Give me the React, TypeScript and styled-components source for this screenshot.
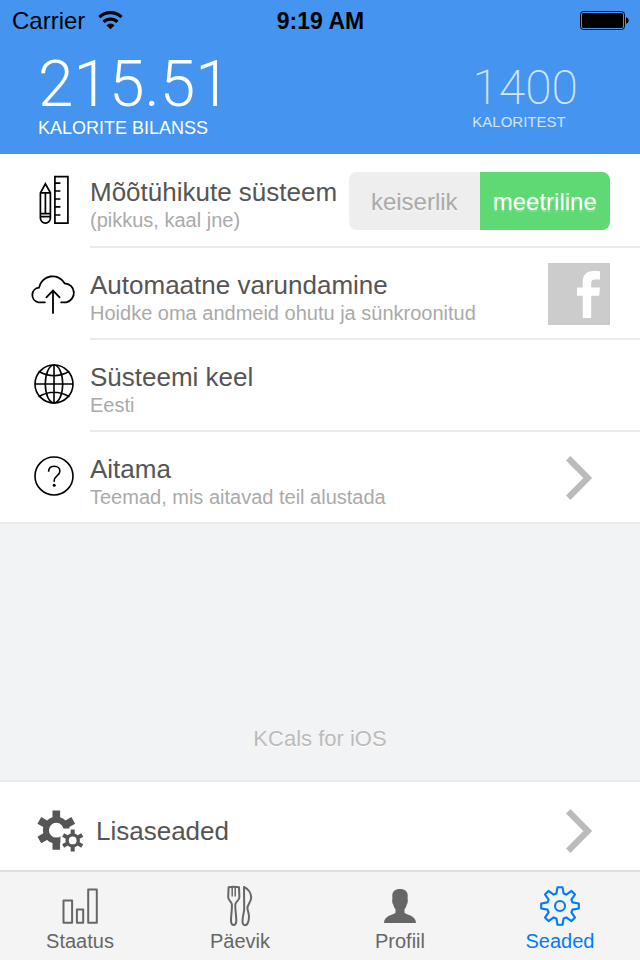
import React from "react";
import styled, { createGlobalStyle, css } from "styled-components";

const GlobalStyle = createGlobalStyle`
  * { box-sizing: border-box; }
  html { -webkit-text-size-adjust: 100%; }
  body {
    margin: 0;
    font-family: "Liberation Sans", Arial, Helvetica, sans-serif;
    color: #555;
    background: #f2f3f5;
  }
  svg { display: block; flex: none; }
  a { color: inherit; text-decoration: none; }
`;

const Page = styled.div`
  display: flex;
  flex-direction: column;
  min-height: 100vh;
`;

const Header = styled.header`
  background: #4595f0;
  color: #fff;
  padding-bottom: 15px;
`;

const StatusBar = styled.div`
  display: grid;
  grid-template-columns: 1fr auto 1fr;
  align-items: center;
  height: 42px;
  padding: 0 11px 0 12px;
  color: #000;
  font-size: 24px;
  line-height: 28px;
`;

const Carrier = styled.div`
  display: flex;
  align-items: center;
  gap: 13px;
`;

const Clock = styled.div`
  font-size: 23px;
  font-weight: 700;
`;

const Battery = styled.div`
  justify-self: end;
`;

const Totals = styled.div`
  display: flex;
  align-items: flex-start;
  justify-content: space-between;
  padding: 11px 62px 0 38px;
`;

const Total = styled.div<{ $minor?: boolean }>`
  ${(p) => p.$minor && css`padding-top: 9px; opacity: 0.75;`}
`;

const TotalValue = styled.div<{ $minor?: boolean }>`
  font-family: Roboto, "Liberation Sans", sans-serif;
  font-weight: ${(p) => (p.$minor ? 200 : 300)};
  font-size: ${(p) => (p.$minor ? 48 : 64)}px;
  line-height: ${(p) => (p.$minor ? 52 : 64)}px;
`;

const TotalLabel = styled.div<{ $minor?: boolean }>`
  font-size: ${(p) => (p.$minor ? 15 : 18)}px;
  line-height: ${(p) => (p.$minor ? 16 : 22)}px;
`;

const List = styled.main`
  background: #fff;
  border-bottom: 2px solid #ebebed;
`;

const rowLayout = css`
  display: grid;
  grid-template-columns: 90px 1fr;
`;

const Row = styled.div`
  ${rowLayout}
`;

const RowLink = styled.a`
  ${rowLayout}
`;

const RowIcon = styled.div`
  display: flex;
  align-items: center;
  justify-content: center;
  padding: 0 0 4px 18px;
`;

const RowBody = styled.div<{ $tall?: boolean; $last?: boolean }>`
  display: flex;
  align-items: center;
  justify-content: space-between;
  gap: 8px;
  min-width: 0;
  height: ${(p) => (p.$tall ? 94 : p.$last ? 90 : 92)}px;
  padding: 2px 30px 0 0;
  border-bottom: ${(p) => (p.$last ? "0" : "2px solid #ebebed")};
`;

const RowText = styled.div`
  padding-top: 8px;
  white-space: nowrap;
`;

const Title = styled.div`
  font-size: 26px;
  line-height: 30px;
  color: #555;
`;

const Subtitle = styled.div`
  font-size: 20px;
  line-height: 26px;
  color: #aaa;
`;

const Segments = styled.div`
  display: flex;
  flex: none;
  height: 58px;
  width: 261px;
  border-radius: 8px;
  overflow: hidden;
`;

const Segment = styled.label`
  flex: 1;
  display: flex;
  align-items: center;
  justify-content: center;
  padding-top: 2px;
  background: #eee;
  color: #aaa;
  font-size: 24px;
  line-height: 28px;
  text-shadow: 0 2px 0 rgba(255, 255, 255, 0.4);
  cursor: pointer;

  &:has(input:checked) {
    background: #5ed973;
    color: #fff;
    text-shadow: 0 2px 0 rgba(255, 255, 255, 0.25);
  }
`;

const SegmentInput = styled.input`
  appearance: none;
  width: 0;
  height: 0;
  margin: 0;
`;

const IconButton = styled.button`
  border: 0;
  padding: 0;
  background: none;
  cursor: pointer;
`;

const ChevronBox = styled.div`
  padding-right: 16px;
`;

const Spacer = styled.div`
  flex: 1;
  display: flex;
  align-items: flex-end;
  justify-content: center;
  padding-bottom: 27px;
  font-size: 22px;
  line-height: 28px;
  color: #bbb;
  text-shadow: 0 1px 0 #fff;
`;

const MoreLink = styled.a`
  display: flex;
  align-items: center;
  height: 90px;
  padding: 9px 46px 0 37px;
  gap: 12px;
  background: #fff;
  border-top: 2px solid #ebebed;
`;

const MoreTitle = styled.div`
  flex: 1;
  font-size: 26px;
  line-height: 30px;
`;

const TabBar = styled.nav`
  display: grid;
  grid-template-columns: repeat(4, 1fr);
  height: 90px;
  border-top: 2px solid #dedede;
  background: #f4f4f4;
`;

const Tab = styled.a<{ $active?: boolean }>`
  display: flex;
  flex-direction: column;
  align-items: center;
  padding-top: 13px;
  gap: 2px;
  font-size: 20px;
  line-height: 24px;
  color: ${(p) => (p.$active ? "#007aff" : "#666")};
`;

const round = (n: number) => Math.round(n * 100) / 100;

function gearPath(cx: number, cy: number, teeth: number, outer: number, inner: number, topHalf: number, baseHalf: number) {
  const base = Math.sqrt(inner * inner - baseHalf * baseHalf);
  const parts: string[] = [];
  for (let i = 0; i <= teeth; i++) {
    const a = ((-90 + (360 / teeth) * i) * Math.PI) / 180;
    const at = (r: number, t: number) =>
      `${round(cx + r * Math.cos(a) - t * Math.sin(a))} ${round(cy + r * Math.sin(a) + t * Math.cos(a))}`;
    const lead = at(base, -baseHalf);
    parts.push(i === 0 ? `M${lead}` : `A${inner} ${inner} 0 0 1 ${lead}`);
    if (i < teeth) {
      parts.push(`L${at(outer, -topHalf)}L${at(outer, topHalf)}L${at(base, baseHalf)}`);
    }
  }
  return parts.join("") + "Z";
}

const circlePath = (cx: number, cy: number, r: number) =>
  `M${cx - r} ${cy}a${r} ${r} 0 1 0 ${2 * r} 0a${r} ${r} 0 1 0 ${-2 * r} 0Z`;

const WifiIcon = () => (
  <svg width="25" height="22" viewBox="0 0 25 22" fill="none" stroke="#000" strokeWidth="3.2" aria-hidden="true">
    <path d="M1.4 7.2A16 16 0 0 1 23.6 7.2" />
    <path d="M5.6 11.8A10 10 0 0 1 19.4 11.8" />
    <path d="M8.4 15.2Q12.5 11.8 16.6 15.2L12.5 19.2Z" fill="#000" stroke="none" />
  </svg>
);

const BatteryIcon = () => (
  <svg width="49" height="20" viewBox="0 0 49 20" aria-hidden="true">
    <rect x="0.5" y="0.5" width="44" height="18" rx="3" fill="none" stroke="#000" />
    <rect x="2" y="2" width="41" height="15" rx="1.6" />
    <path d="M46 6.2c3.6.6 3.6 6 0 6.6z" />
  </svg>
);

const RulerIcon = () => (
  <svg width="32" height="52" viewBox="0 -2 32 52" fill="none" stroke="#000" strokeWidth="1.7" aria-hidden="true">
    <path d="M16.9 1.6h13v46.6h-13zM17 8.2h5.4M17 16h5.4M17 24h5.4M17 31.8h5.4M17 40h5.4" />
    <path d="M2.4 17.8 7.4 8.8 12.4 17.8V43a5 5.2 0 0 1-10 0zM2.4 17.8h10M7.4 17.8v20.8M2.4 38.6h10M2.4 41.6h10" />
  </svg>
);

const CloudIcon = () => (
  <svg width="48" height="46" viewBox="0 -4 48 46" fill="none" stroke="#000" strokeWidth="1.8" strokeLinecap="round" aria-hidden="true">
    <path d="M14.9 29.3H8.2A7.4 7.4 0 0 1 9 14.7A13.8 13.8 0 0 1 34.6 10.3A9.6 9.6 0 0 1 36.2 29.3H31.2" />
    <path d="M23 40V17.8M16.4 24.3 23 17.6l6.6 6.7" />
  </svg>
);

const GlobeIcon = () => (
  <svg width="40" height="40" viewBox="0 0 40 40" fill="none" stroke="#000" strokeWidth="1.6" aria-hidden="true">
    <circle cx="20" cy="20" r="19" />
    <ellipse cx="20" cy="20" rx="8.7" ry="19" />
    <path d="M20 1v38M1 20h38M4.6 7.2Q20 16.2 35.4 7.2M4.6 32.8Q20 23.8 35.4 32.8" />
  </svg>
);

const HelpIcon = () => (
  <svg width="40" height="42" viewBox="0 -2 40 42" fill="none" stroke="#000" strokeWidth="1.6" aria-hidden="true">
    <circle cx="20" cy="20" r="19" />
    <path d="M14.6 15.8C14.6 12.2 16.8 10.3 20.2 10.3S25.9 12.3 25.9 15.2C25.9 19.4 20.2 19.8 20.2 24.6V25.8" />
    <circle cx="20.2" cy="29.2" r="1.5" fill="#000" stroke="none" />
  </svg>
);

const FacebookIcon = () => (
  <svg width="62" height="62" viewBox="0 0 62 62" aria-hidden="true">
    <path fill="#ccc" d="M0 0h62v62H0z" />
    <path fill="#fff" d="M52 8.2v8.4h-4.6c-3.2 0-4.2 1.3-4.2 4v3.9H52l-.8 8.2h-8V55h-8.4V32.7H29v-8.2h5.8v-5.6C34.8 11.6 38.6 8 45.2 8c3 0 5.2.1 6.8.2z" />
  </svg>
);

const ChevronIcon = () => (
  <svg width="29" height="46" viewBox="0 0 29 46" fill="none" stroke="#bbb" strokeWidth="6.2" aria-hidden="true">
    <path d="M3.2 3.2 22.8 23 3.2 42.8" />
  </svg>
);

const GearsIcon = () => (
  <svg width="47" height="42" viewBox="0 0 47 42" aria-hidden="true">
    <path fill="#555" fillRule="evenodd" d={gearPath(19.3, 20.2, 6, 19.6, 13.4, 3.8, 3.8) + circlePath(19.3, 20.2, 7.4)} />
    <path fill="#fff" d="M23.4 18.5H47V42H23.4V26z" />
    <path fill="#555" fillRule="evenodd" d={gearPath(35.7, 30.4, 6, 11, 7.2, 2, 2) + circlePath(35.7, 30.4, 3.9)} />
  </svg>
);

const StatsIcon = () => (
  <svg width="40" height="42" viewBox="0 0 40 42" fill="none" stroke="#666" strokeWidth="2" strokeLinejoin="round" aria-hidden="true">
    <path d="M3.5 15.4h8.6v22.4H3.5zM16.9 24.4h6.3v13.4h-6.3zM28.2 4.4h8.6v33.4h-8.6z" />
  </svg>
);

const DiaryIcon = () => (
  <svg width="28" height="42" viewBox="0 0 28 42" fill="none" stroke="#666" strokeWidth="2" strokeLinejoin="round" aria-hidden="true">
    <path d="M2.6 2.3 2.2 12C2.2 15.5 5 16.2 5.8 19C6.4 23 5 30 5 35C5 38.5 6 40 7.6 40S10.3 38.5 10.3 35C10.3 30 8.8 23 9.4 19C10.2 16.2 13.4 15.500 13.4 12L13 2.3Q7.8 1.3 2.6 2.3Z" />
    <path strokeWidth="1.5" d="M6.2 2V11.5M9.2 2V11.5" />
    <path d="M18 2C22.5 4 25.2 8.5 25.2 12.5C25.2 17 21.4 19.5 21.4 23C21.4 25.5 23 28 23 31.5C23 36 21.5 40.3 19 40.3S16.4 37.5 16.6 34.5C16.9 30 18.2 27.500 18.2 23.5Z" />
  </svg>
);

const PersonIcon = () => (
  <svg width="32" height="42" viewBox="0 0 32 42" fill="#666" aria-hidden="true">
    <path d="M16 4C11 4 8.3 6.4 8.3 10.6L8.4 14C7.9 14.8 8.3 19 9.3 19.5C9.6 21.5 10.4 23 11.5 24.2V27.8C9.5 30 0 30.5 0 38H32C32 30.5 22.5 30 20.5 27.8V24.2C21.6 23 22.4 21.5 22.7 19.5C23.7 19 24.1 14.8 23.6 14L23.7 10.6C23.7 6.4 21 4 16 4Z" />
  </svg>
);

const SettingsIcon = () => (
  <svg width="42" height="42" viewBox="0 0 42 42" fill="none" stroke="#007aff" strokeWidth="2.1" strokeLinejoin="round" aria-hidden="true">
    <path d={gearPath(21, 21, 8, 18.8, 13, 2.5, 3.6)} />
    <circle cx="21" cy="21" r="5" />
  </svg>
);

export default function App() {
  return (
    <>
      <GlobalStyle />
      <Page>
        <Header>
          <StatusBar>
            <Carrier>
              <span>Carrier</span>
              <WifiIcon />
            </Carrier>
            <Clock>9:19 AM</Clock>
            <Battery>
              <BatteryIcon />
            </Battery>
          </StatusBar>
          <Totals>
            <Total>
              <TotalValue>215.51</TotalValue>
              <TotalLabel>KALORITE BILANSS</TotalLabel>
            </Total>
            <Total $minor>
              <TotalValue $minor>1400</TotalValue>
              <TotalLabel $minor>KALORITEST</TotalLabel>
            </Total>
          </Totals>
        </Header>

        <List>
          <Row>
            <RowIcon>
              <RulerIcon />
            </RowIcon>
            <RowBody $tall>
              <RowText>
                <Title id="units">Mõõtühikute süsteem</Title>
                <Subtitle>(pikkus, kaal jne)</Subtitle>
              </RowText>
              <Segments role="radiogroup" aria-labelledby="units">
                <Segment>
                  <SegmentInput type="radio" name="units" value="imperial" />
                  keiserlik
                </Segment>
                <Segment>
                  <SegmentInput type="radio" name="units" value="metric" defaultChecked />
                  meetriline
                </Segment>
              </Segments>
            </RowBody>
          </Row>
          <Row>
            <RowIcon>
              <CloudIcon />
            </RowIcon>
            <RowBody>
              <RowText>
                <Title>Automaatne varundamine</Title>
                <Subtitle>Hoidke oma andmeid ohutu ja sünkroonitud</Subtitle>
              </RowText>
              <IconButton type="button" aria-label="Facebook">
                <FacebookIcon />
              </IconButton>
            </RowBody>
          </Row>
          <RowLink href="#keel">
            <RowIcon>
              <GlobeIcon />
            </RowIcon>
            <RowBody>
              <RowText>
                <Title>Süsteemi keel</Title>
                <Subtitle>Eesti</Subtitle>
              </RowText>
            </RowBody>
          </RowLink>
          <RowLink href="#aitama">
            <RowIcon>
              <HelpIcon />
            </RowIcon>
            <RowBody $last>
              <RowText>
                <Title>Aitama</Title>
                <Subtitle>Teemad, mis aitavad teil alustada</Subtitle>
              </RowText>
              <ChevronBox>
                <ChevronIcon />
              </ChevronBox>
            </RowBody>
          </RowLink>
        </List>

        <Spacer>KCals for iOS</Spacer>

        <MoreLink href="#lisaseaded">
          <GearsIcon />
          <MoreTitle>Lisaseaded</MoreTitle>
          <ChevronIcon />
        </MoreLink>

        <TabBar>
          <Tab href="#staatus">
            <StatsIcon />
            Staatus
          </Tab>
          <Tab href="#paevik">
            <DiaryIcon />
            Päevik
          </Tab>
          <Tab href="#profiil">
            <PersonIcon />
            Profiil
          </Tab>
          <Tab href="#seaded" $active aria-current="page">
            <SettingsIcon />
            Seaded
          </Tab>
        </TabBar>
      </Page>
    </>
  );
}
